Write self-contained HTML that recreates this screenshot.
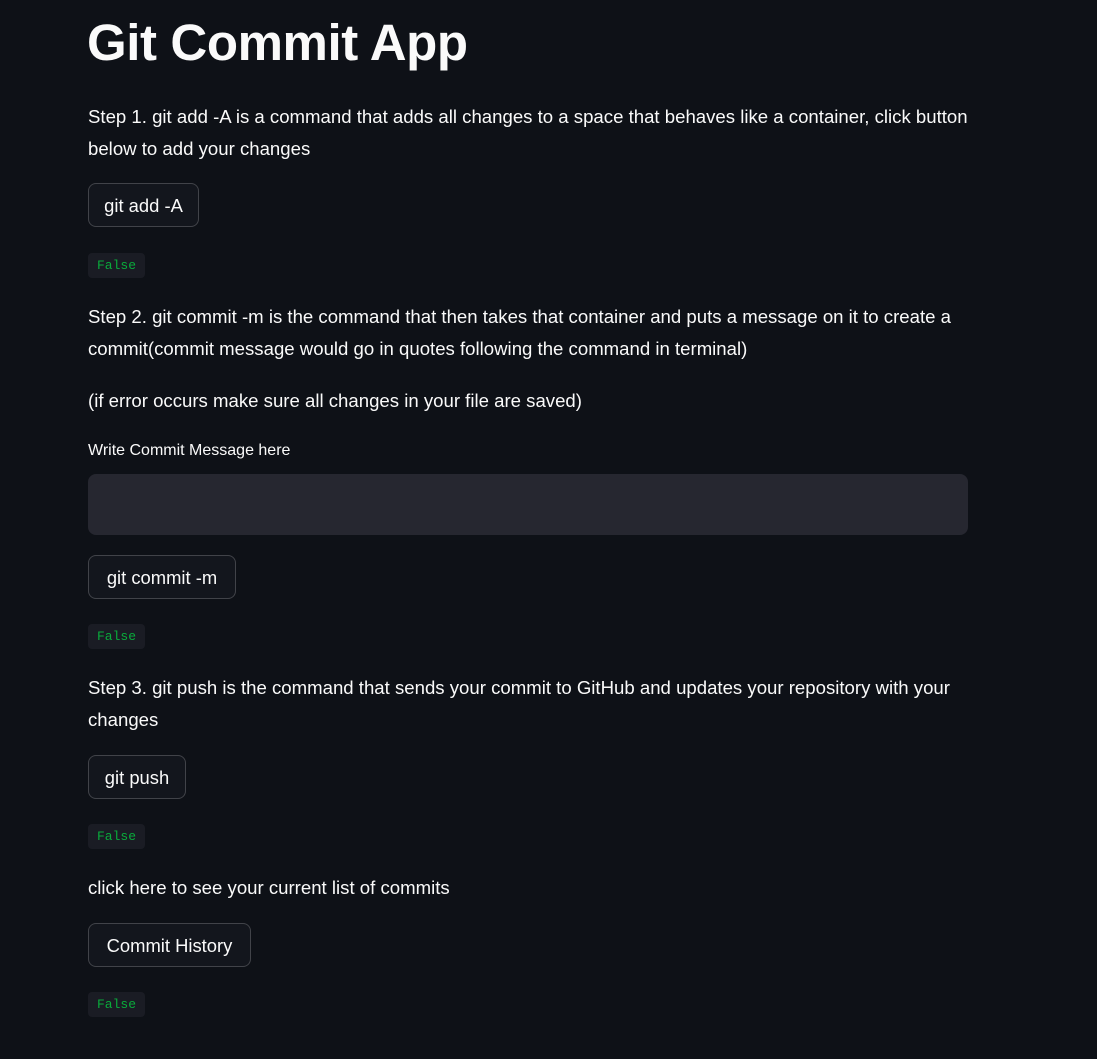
<!DOCTYPE html>
<html><head><meta charset="utf-8"><style>
body{margin:0;width:1097px;height:1059px;background:#0e1117;color:#fafafa;font-family:"Liberation Sans",sans-serif;overflow:hidden;position:relative}
.t{position:absolute;left:88px;white-space:nowrap;font-size:18.6px;line-height:32px;letter-spacing:0px}
h1{position:absolute;left:87px;top:8px;margin:0;font-size:51px;line-height:70px;font-weight:bold;letter-spacing:-0.4px}
.b{position:absolute;left:88px;border:1px solid rgba(250,250,250,0.2);border-radius:8px;box-sizing:border-box;height:44px;background:#13161d;font-size:18.4px;line-height:44px;text-align:center;white-space:nowrap}
.c{position:absolute;left:88px;width:57px;height:25px;background:#1a1c24;border-radius:4px;color:#09ab3b;font-family:"Liberation Mono",monospace;font-size:13px;line-height:26px;text-align:center}
.in{position:absolute;left:88px;top:474px;width:880px;height:61px;background:#262730;border-radius:8px}
</style></head><body>
<h1>Git Commit App</h1>
<div class="t" style="top:101px">Step 1. git add -A is a command that adds all changes to a space that behaves like a container, click button</div>
<div class="t" style="top:133px">below to add your changes</div>
<div class="b" style="top:183px;width:111px">git add -A</div>
<div class="c" style="top:253px">False</div>
<div class="t" style="top:301px">Step 2. git commit -m is the command that then takes that container and puts a message on it to create a</div>
<div class="t" style="top:333px">commit(commit message would go in quotes following the command in terminal)</div>
<div class="t" style="top:385px">(if error occurs make sure all changes in your file are saved)</div>
<div class="t" style="top:435px;font-size:16px">Write Commit Message here</div>
<div class="in"></div>
<div class="b" style="top:555px;width:148px">git commit -m</div>
<div class="c" style="top:624px">False</div>
<div class="t" style="top:672px">Step 3. git push is the command that sends your commit to GitHub and updates your repository with your</div>
<div class="t" style="top:704px">changes</div>
<div class="b" style="top:755px;width:98px">git push</div>
<div class="c" style="top:824px">False</div>
<div class="t" style="top:872px">click here to see your current list of commits</div>
<div class="b" style="top:923px;width:163px">Commit History</div>
<div class="c" style="top:992px">False</div>
</body></html>
